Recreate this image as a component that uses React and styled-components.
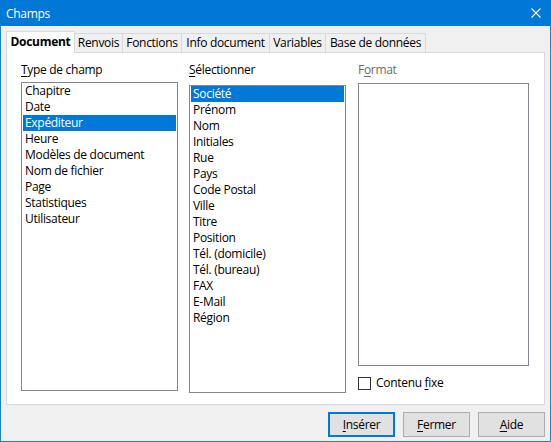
import styled, { createGlobalStyle } from "styled-components";

const GlobalStyle = createGlobalStyle`
  html, body {
    margin: 0;
    padding: 0;
    background: #f0f0f0;
  }
  * {
    box-sizing: border-box;
  }
`;

const Window = styled.div`
  width: 551px;
  height: 442px;
  border: 1px solid #1883d7;
  border-top: none;
  background: #f0f0f0;
  font-family: "Open Sans", "Noto Sans", sans-serif;
  font-size: 12px;
  letter-spacing: -0.3px;
  color: #000;
  display: flex;
  flex-direction: column;
`;

const TitleBar = styled.div`
  height: 26px;
  margin: 0 -1px;
  background: #0078d7;
  color: #fff;
  display: flex;
  align-items: center;
  justify-content: space-between;
  padding: 0 10px 0 6px;
  font-size: 12px;
`;

const CloseButton = styled.svg`
  width: 10px;
  height: 10px;
  display: block;
`;

const Body = styled.div`
  padding: 5px 5px 0 5px;
  display: flex;
  flex-direction: column;
`;

const TabStrip = styled.div`
  display: flex;
  align-items: flex-end;
  height: 22px;
  position: relative;
  z-index: 1;
`;

const Tab = styled.div`
  width: ${(p) => p.$w}px;
  height: ${(p) => (p.$active ? 22 : 20)}px;
  margin-left: ${(p) => (p.$first ? 0 : -1)}px;
  border: 1px solid #d9d9d9;
  border-bottom: ${(p) => (p.$active ? "1px solid #fff" : "1px solid #d9d9d9")};
  background: ${(p) => (p.$active ? "#fff" : "#f0f0f0")};
  font-weight: ${(p) => (p.$active ? 700 : 400)};
  display: flex;
  align-items: center;
  justify-content: center;
  line-height: 16px;
  white-space: nowrap;
  padding-bottom: ${(p) => (p.$active ? 1 : 0)}px;
`;

const Panel = styled.div`
  margin-top: -1px;
  height: 353px;
  border: 1px solid #d9d9d9;
  background: #fff;
  padding: 9px 0 0 14px;
  display: grid;
  grid-template-columns: 157px 157px 172px;
  column-gap: 11px;
  align-items: start;
`;

const Column = styled.div`
  display: flex;
  flex-direction: column;
  margin-left: ${(p) => p.$shift || 0}px;
`;

const Label = styled.div`
  line-height: 16px;
  height: 16px;
  color: ${(p) => (p.$disabled ? "#6d6d6d" : "#000")};
  margin-bottom: ${(p) => p.$gap}px;
`;

const Mnemonic = styled.span`
  text-decoration: underline;
  text-underline-offset: 2px;
`;

const ListBox = styled.div`
  height: ${(p) => p.$h}px;
  border: 1px solid #828790;
  background: #fff;
  padding: 0 1px;
`;

const Item = styled.div`
  height: 16px;
  line-height: 16px;
  padding-left: 2px;
  white-space: nowrap;
  background: ${(p) => (p.$selected ? "#0078d7" : "transparent")};
  color: ${(p) => (p.$selected ? "#fff" : "#000")};
`;

const CheckRow = styled.label`
  display: flex;
  align-items: center;
  gap: 5px;
  margin-top: 9px;
  line-height: 16px;
`;

const CheckBox = styled.span`
  width: 13px;
  height: 13px;
  border: 1px solid #333;
  background: #fff;
  display: block;
`;

const ButtonRow = styled.div`
  display: flex;
  justify-content: flex-end;
  gap: 8px;
  margin-top: 7px;
`;

const Button = styled.button`
  width: 67px;
  height: 25px;
  background: #e1e1e1;
  border: ${(p) => (p.$default ? "2px solid #0078d7" : "1px solid #adadad")};
  font-family: inherit;
  font-size: 12px;
  letter-spacing: -0.3px;
  color: #000;
  padding: 0;
  margin: 0;
`;

const tabs = [
  { label: "Document", w: 69 },
  { label: "Renvois", w: 49 },
  { label: "Fonctions", w: 60 },
  { label: "Info document", w: 89 },
  { label: "Variables", w: 57 },
  { label: "Base de données", w: 101 },
];

const types = [
  "Chapitre",
  "Date",
  "Expéditeur",
  "Heure",
  "Modèles de document",
  "Nom de fichier",
  "Page",
  "Statistiques",
  "Utilisateur",
];

const fields = [
  "Société",
  "Prénom",
  "Nom",
  "Initiales",
  "Rue",
  "Pays",
  "Code Postal",
  "Ville",
  "Titre",
  "Position",
  "Tél. (domicile)",
  "Tél. (bureau)",
  "FAX",
  "E-Mail",
  "Région",
];

export default function App() {
  return (
    <>
      <GlobalStyle />
      <Window>
        <TitleBar>
          <span>Champs</span>
          <CloseButton viewBox="0 0 10 10">
            <path d="M0.5 0.5 L9.5 9.5 M9.5 0.5 L0.5 9.5" stroke="#fff" strokeWidth="1.1" fill="none" />
          </CloseButton>
        </TitleBar>
        <Body>
          <TabStrip>
            {tabs.map((t, i) => (
              <Tab key={t.label} $w={t.w} $active={i === 0} $first={i === 0}>
                {t.label}
              </Tab>
            ))}
          </TabStrip>
          <Panel>
            <Column>
              <Label $gap={4}>
                <Mnemonic>T</Mnemonic>ype de champ
              </Label>
              <ListBox $h={309}>
                {types.map((t) => (
                  <Item key={t} $selected={t === "Expéditeur"}>
                    {t}
                  </Item>
                ))}
              </ListBox>
            </Column>
            <Column>
              <Label $gap={7}>
                <Mnemonic>S</Mnemonic>électionner
              </Label>
              <ListBox $h={308}>
                {fields.map((f) => (
                  <Item key={f} $selected={f === "Société"}>
                    {f}
                  </Item>
                ))}
              </ListBox>
            </Column>
            <Column $shift={1}>
              <Label $gap={5} $disabled>
                F<Mnemonic>o</Mnemonic>rmat
              </Label>
              <ListBox $h={283} />
              <CheckRow>
                <CheckBox />
                <span>
                  Contenu <Mnemonic>f</Mnemonic>ixe
                </span>
              </CheckRow>
            </Column>
          </Panel>
          <ButtonRow>
            <Button $default>
              <Mnemonic>I</Mnemonic>nsérer
            </Button>
            <Button>
              <Mnemonic>F</Mnemonic>ermer
            </Button>
            <Button>
              <Mnemonic>A</Mnemonic>ide
            </Button>
          </ButtonRow>
        </Body>
      </Window>
    </>
  );
}
